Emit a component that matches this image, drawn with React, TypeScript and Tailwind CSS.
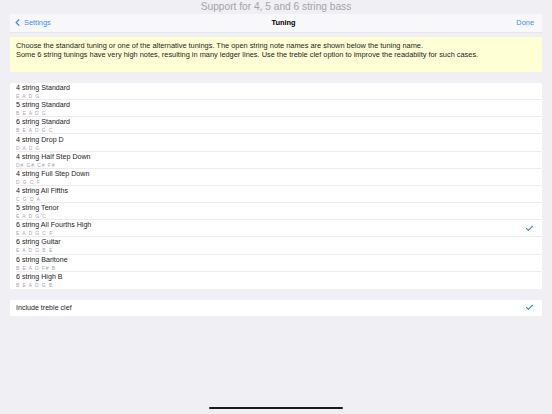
import { Check, ChevronLeft } from "lucide-react";

const tunings = [
  { name: "4 string Standard", notes: "E A D G" },
  { name: "5 string Standard", notes: "B E A D G" },
  { name: "6 string Standard", notes: "B E A D G C" },
  { name: "4 string Drop D", notes: "D A D G" },
  { name: "4 string Half Step Down", notes: "D# G# C# F#" },
  { name: "4 string Full Step Down", notes: "D G C F" },
  { name: "4 string All Fifths", notes: "C G D A" },
  { name: "5 string Tenor", notes: "E A D G C" },
  { name: "6 string All Fourths High", notes: "E A D G C F", selected: true },
  { name: "6 string Guitar", notes: "E A D G B E" },
  { name: "6 string Baritone", notes: "B E A D F# B" },
  { name: "6 string High B", notes: "B E A D G B" },
];

export default function App() {
  return (
    <div
      className="flex h-[414px] w-[552px] flex-col bg-[#efeff4] text-black"
      style={{ fontFamily: "'Liberation Sans', Arial, sans-serif" }}
    >
      <div className="flex h-[14px] items-center justify-center pt-[1px] text-[10.2px] leading-none text-[#a4a4a8]">
        Support for 4, 5 and 6 string bass
      </div>

      <div className="mx-[10px] flex h-[19px] items-center justify-between border-b border-[#e6e6ea] bg-[#f8f8fa] pl-[2px] pr-[5px] text-[7.4px]">
        <div className="flex items-center text-[#3a8cf6]">
          <ChevronLeft className="h-[11px] w-[11px]" strokeWidth={2.6} />
          <span className="ml-[1px]">Settings</span>
        </div>
        <div className="font-bold">Tuning</div>
        <div className="pr-[3px] text-[#3a8cf6]">Done</div>
      </div>

      <div className="mx-[10px] mt-[4px] h-[35px] bg-[#ffffd6] px-[6px] pt-[4px] text-[7.4px] leading-[9px] text-[#1c1c1c]">
        <p>
          Choose the standard tuning or one of the alternative tunings. The open string note names are shown below the tuning name.
        </p>
        <p>
          Some 6 string tunings have very high notes, resulting in many ledger lines. Use the treble clef option to improve the readabilty for such cases.
        </p>
      </div>

      <div className="mx-[10px] mt-[11px] bg-white">
        {tunings.map((t, i) => (
          <div key={t.name} className="pl-[6px]">
            <div
              className={
                "flex h-[17.17px] items-center justify-between pr-[8px] pt-[1px] " +
                (i < tunings.length - 1 ? "border-b border-[#ececef]" : "")
              }
            >
              <div className="flex flex-col">
                <span className="text-[7.1px] leading-[9px] text-[#1c1c1c]">{t.name}</span>
                <span className="text-[5px] leading-[6px] tracking-[0.9px] text-[#a6a6aa]">{t.notes}</span>
              </div>
              {t.selected && <Check className="h-[9px] w-[9px] text-[#3a8cf6]" strokeWidth={3} />}
            </div>
          </div>
        ))}
      </div>

      <div className="mx-[10px] mt-[11px] flex h-[16px] items-center justify-between bg-white pl-[6px] pr-[8px]">
        <span className="text-[7.1px] text-[#1c1c1c]">Include treble clef</span>
        <Check className="h-[9px] w-[9px] text-[#3a8cf6]" strokeWidth={3} />
      </div>

      <div className="mt-auto mb-[5px] flex justify-center">
        <div className="h-[2px] w-[134px] rounded-full bg-[#1a1a1a]" />
      </div>
    </div>
  );
}
